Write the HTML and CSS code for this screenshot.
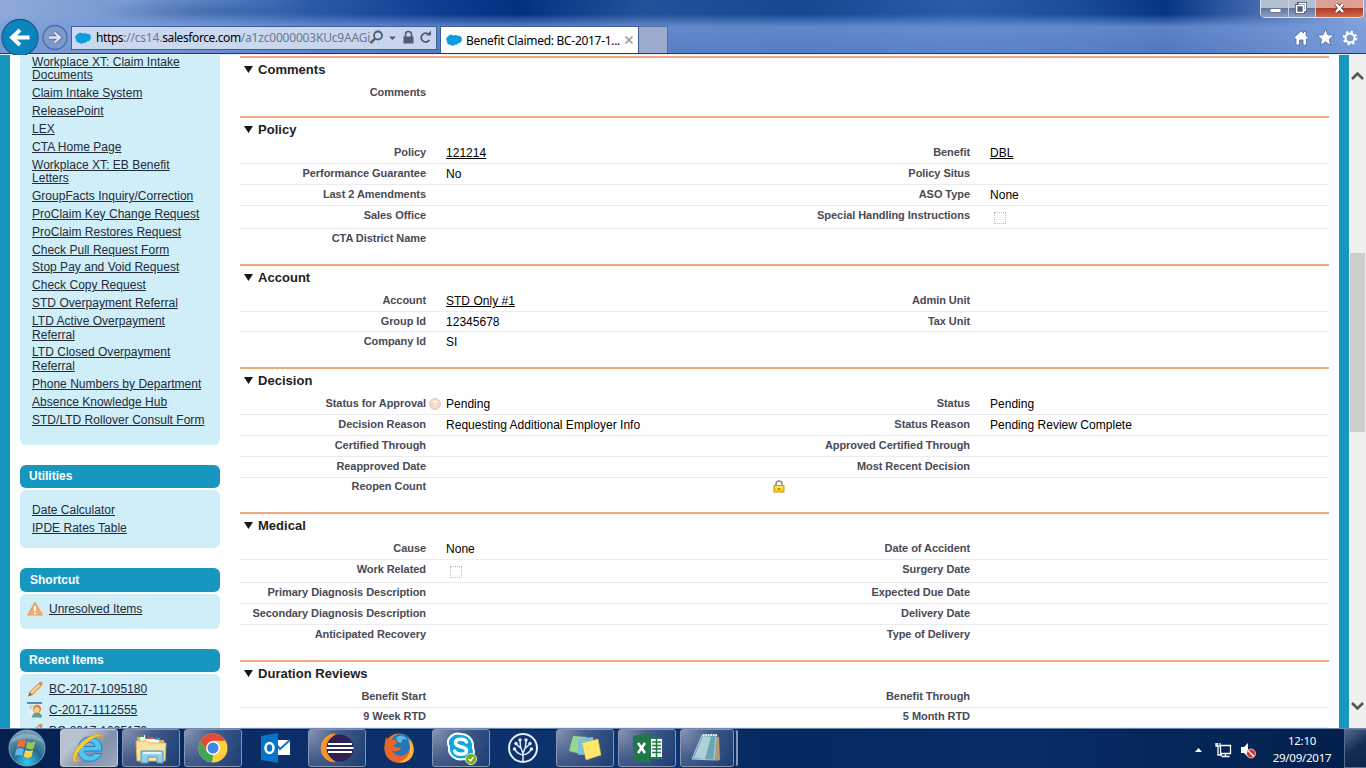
FILE: index.html
```html
<!DOCTYPE html>
<html lang="en">
<head>
<meta charset="utf-8">
<title>Benefit Claimed: BC-2017-1095180</title>
<link rel="stylesheet" href="styles.css">
</head>
<body>
<svg class="defs" width="0" height="0" aria-hidden="true">
  <symbol id="cloud" viewBox="0 0 16 12"><path fill="#0d9ddb" d="M4 1.200C5.300 .3 7 .8 7.600 1.700C9 .6 11 .8 11.700 2C14 1.200 16 2.800 15.900 5.300C15.800 8 14 9.600 12 9.300C11.300 10.700 10 11 8.800 10.700C7.800 12 5.200 12 4.300 10.700C2 10.900 .9 9.300 1.200 7.600C-.3 6 .1 3.800 1.200 3.200C1.500 2.300 2.700 1.300 4 1.200Z"/></symbol>
  <symbol id="pencil" viewBox="0 0 16 16"><path d="M1 15.500 2.500 11 5.500 14Z" fill="#776650"/><path d="M2.800 11 11 2.800 14 5.200 5.500 14Z" fill="#f4b65b" stroke="#bb8544" stroke-width=".7"/><path d="M10.800 2.800 13 .8 15.500 1 15.200 4 13.900 5.300Z" fill="#da8b75"/><path d="M4 12 12.500 3.700" stroke="#ffe0a0" stroke-width="1.200"/></symbol>
</svg>

<header class="chrome">
  <div class="window-buttons">
    <span class="wb min"><svg width="28" height="16"><rect x="9" y="8.500" width="11" height="4" rx="1" fill="#fff" stroke="#556" stroke-width=".7"/></svg></span>
    <span class="wb max"><svg width="26" height="16"><path d="M9.500 3.500h7v7h-7z M7.500 5.500h7v7h-7z" fill="#8b99b2" stroke="#34415c" stroke-width="3"/><path d="M9.500 3.500h7v7h-2 M7.500 5.500h7v7h-7z" fill="#50607c" stroke="#fff" stroke-width="1.600"/></svg></span>
    <span class="wb close"><svg width="47" height="16"><path d="m20 4 7 8m0-8-7 8" stroke="#5b2420" stroke-width="4"/><path d="m20 4 7 8m0-8-7 8" stroke="#fff" stroke-width="2.500"/></svg></span>
  </div>
  <div class="navbar">
    <svg class="nav-icons" width="72" height="40" viewBox="0 0 72 40"><circle cx="20" cy="22.500" r="18" fill="#0b86bd" stroke="#1b5b93" stroke-width="1.300"/><path d="M29.500 22.500H12m8-7.500-8 7.500 8 7.500" fill="none" stroke="#fff" stroke-width="3.800"/><circle cx="55" cy="22.500" r="12" fill="#7d9acb" stroke="#4c6aa5" stroke-width="1.300"/><path d="M49 22.500h11m-5.500-5 5.500 5-5.500 5" fill="none" stroke="#577099" stroke-width="4"/><path d="M49 22.500h11m-5.500-5 5.500 5-5.500 5" fill="none" stroke="#dce6f5" stroke-width="2.300"/></svg>
    <div class="address">
      <svg width="16" height="12"><use href="#cloud"/></svg>
      <span class="url"><b>https</b>://cs14.<b>salesforce.com</b>/a1zc0000003KUc9AAGi</span>
      <svg class="address-icons" width="66" height="20" viewBox="0 0 66 20"><g fill="none" stroke="#4d5b73"><circle cx="9" cy="7.500" r="4" stroke-width="1.800"/><path d="m6.200 10.500-4.700 4.700" stroke-width="2.400"/><path d="M36.500 9V6.500a3 3 0 0 1 6 0V9" stroke-width="1.600"/><path d="M60 6.500A4.500 4.500 0 1 0 60.500 12" stroke-width="1.800"/></g><path d="M20 8.500h7l-3.500 3.500zM34.500 8.500h10v7h-10zM57 7.500h5V2.500z" fill="#4d5b73"/></svg>
    </div>
    <div class="tab"><svg width="16" height="12"><use href="#cloud"/></svg><span class="tab-title">Benefit Claimed: BC-2017-1...</span><svg class="tab-close" width="8" height="8"><path d="m.5.5 7 7m0-7-7 7" stroke="#a3a3a3" stroke-width="1.800"/></svg></div>
    <div class="newtab"></div>
    <svg class="tools" width="68" height="20" viewBox="0 0 68 20"><g fill="#fff" stroke="#4767a1" stroke-width=".8"><path d="M1 9.500 8 3l2.500 2V3.500h2.500v4L15.500 10l-1 1.500-1-.8V17H10v-5H6.500v5H3v-6.300l-1 .8z"/><path d="m32.500 1 2.400 5.800 6.100.4-4.700 4 1.500 6.100-5.300-3.400-5.300 3.400 1.500-6.100-4.700-4 6.100-.4z"/></g><g fill="none"><circle cx="57" cy="10" r="6" stroke="#fff" stroke-width="2.500" stroke-dasharray="2.200 2.512"/><circle cx="57" cy="10" r="4.500" stroke="#fff" stroke-width="2"/></g></svg>
  </div>
</header>

<main class="page">
  <aside class="sidebar">
    <nav class="panel links first">
      <a>Workplace XT: Claim Intake<br>Documents</a><a>Claim Intake System</a><a>ReleasePoint</a><a>LEX</a><a>CTA Home Page</a><a>Workplace XT: EB Benefit<br>Letters</a><a>GroupFacts Inquiry/Correction</a><a>ProClaim Key Change Request</a><a>ProClaim Restores Request</a><a>Check Pull Request Form</a><a>Stop Pay and Void Request</a><a>Check Copy Request</a><a>STD Overpayment Referral</a><a>LTD Active Overpayment<br>Referral</a><a>LTD Closed Overpayment<br>Referral</a><a>Phone Numbers by Department</a><a>Absence Knowledge Hub</a><a>STD/LTD Rollover Consult Form</a>
    </nav>
    <h3 class="side-title">Utilities</h3>
    <nav class="panel links utilities"><a>Date Calculator</a><a>IPDE Rates Table</a></nav>
    <h3 class="side-title tall">Shortcut</h3>
    <div class="panel icons shortcut"><div class="item"><svg width="16" height="16" viewBox="0 0 16 16"><path d="M8 1.500 15.300 14H.7z" fill="#f5aa69" stroke="#e2a174" stroke-linejoin="round" stroke-width="1.200"/><path d="M8 5v5m0 1.500v1.800" stroke="#fff" stroke-width="2"/></svg><a>Unresolved Items</a></div></div>
    <h3 class="side-title">Recent Items</h3>
    <div class="panel icons recent">
      <div class="item"><svg width="16" height="16"><use href="#pencil"/></svg><a>BC-2017-1095180</a></div>
      <div class="item"><svg width="16" height="16" viewBox="0 0 16 16"><path d="M0 1h15v13H2z" fill="#e6edef"/><path d="M0 0h15v2H0z" fill="#4e8eae"/><path d="M2 4h4M2 6h3" stroke="#a5bdc6"/><path d="M5 15.500c0-4 3-5 5-5s5 1 5 5z" fill="#5d9f91"/><circle cx="10" cy="7" r="4.200" fill="#d78b40"/><circle cx="9.700" cy="8" r="2.800" fill="#f8d094"/></svg><a>C-2017-1112555</a></div>
      <div class="item"><svg width="16" height="16"><use href="#pencil"/></svg><a>BC-2017-1095179</a></div>
    </div>
  </aside>

  <div class="detail">
    <section class="h60"><h2>Comments</h2><div class="row last"><b>Comments</b></div></section>
    <section class="h148"><h2>Policy</h2>
      <div class="row"><b>Policy</b><span><a>121214</a></span><b>Benefit</b><span><a>DBL</a></span></div>
      <div class="row"><b>Performance Guarantee</b><span>No</span><b>Policy Situs</b></div>
      <div class="row"><b>Last 2 Amendments</b><span></span><b>ASO Type</b><span>None</span></div>
      <div class="row r23"><b>Sales Office</b><span></span><b>Special Handling Instructions</b><span><i class="check"></i></span></div>
      <div class="row last"><b>CTA District Name</b></div>
    </section>
    <section class="h103"><h2>Account</h2>
      <div class="row"><b>Account</b><span><a>STD Only #1</a></span><b>Admin Unit</b></div>
      <div class="row r20"><b>Group Id</b><span>12345678</span><b>Tax Unit</b></div>
      <div class="row last"><b>Company Id</b><span>SI</span></div>
    </section>
    <section class="h145"><h2>Decision</h2>
      <div class="row"><b>Status for Approval</b><span class="with-help"><svg class="help" width="12" height="12"><circle cx="6" cy="6" r="5.500" fill="#f2d9c6" stroke="#e8c7ae"/><path d="M4.300 4.800c0-2.300 3.500-2 3.400-.2 0 1.200-1.700 1.200-1.700 2.600m0 1v1.300" fill="none" stroke="#fff" stroke-width="1.200"/></svg>Pending</span><b>Status</b><span>Pending</span></div>
      <div class="row"><b>Decision Reason</b><span>Requesting Additional Employer Info</span><b>Status Reason</b><span>Pending Review Complete</span></div>
      <div class="row"><b>Certified Through</b><span></span><b>Approved Certified Through</b></div>
      <div class="row"><b>Reapproved Date</b><span></span><b>Most Recent Decision</b></div>
      <div class="row last tight"><b>Reopen Count</b><span class="lock-cell"><svg width="12" height="13" viewBox="0 0 12 13"><path d="M3 6V4a3 3 0 0 1 6 0v2" fill="none" stroke="#8f8a74" stroke-width="1.500"/><rect x="1" y="5.500" width="10" height="6.500" fill="#f9cf22" stroke="#c99a1c"/><path d="M2 7h8" stroke="#ffec86"/><path d="M6 8v2" stroke="#946b13" stroke-width="1.500"/></svg></span></div>
    </section>
    <section class="h148"><h2>Medical</h2>
      <div class="row"><b>Cause</b><span>None</span><b>Date of Accident</b></div>
      <div class="row r23"><b>Work Related</b><span><i class="check"></i></span><b>Surgery Date</b></div>
      <div class="row"><b>Primary Diagnosis Description</b><span></span><b>Expected Due Date</b></div>
      <div class="row"><b>Secondary Diagnosis Description</b><span></span><b>Delivery Date</b></div>
      <div class="row last"><b>Anticipated Recovery</b><span></span><b>Type of Delivery</b></div>
    </section>
    <section class="h148"><h2>Duration Reviews</h2>
      <div class="row"><b>Benefit Start</b><span></span><b>Benefit Through</b></div>
      <div class="row r20 tight"><b>9 Week RTD</b><span></span><b>5 Month RTD</b></div>
    </section>
  </div>

  <div class="scrollbar">
    <svg class="up" width="17" height="14"><path d="m3 10 5.500-5.500L14 10" fill="none" stroke="#555" stroke-width="2.600"/></svg>
    <div class="thumb"></div>
    <svg class="down" width="17" height="14"><path d="m3 4 5.500 5.500L14 4" fill="none" stroke="#555" stroke-width="2.600"/></svg>
  </div>
</main>

<footer class="taskbar">
  <div class="start"><svg width="40" height="38" viewBox="0 0 40 38"><defs><radialGradient id="orb" cx=".5" cy=".9" r=".9"><stop stop-color="#37c8ec"/><stop offset=".45" stop-color="#246a92"/><stop offset="1" stop-color="#7ca3b7"/></radialGradient></defs><circle cx="20" cy="19" r="18" fill="url(#orb)" stroke="#7ba2ba"/><path d="M11.500 11.500c3-1.500 5-1.300 7.500.2l-1.700 7c-2.300-1.500-4.500-1.700-7.500-.3z" fill="#eb713b"/><path d="M20.500 12.500c2.500 1.300 5 1.200 8-.3l-1.900 7.200c-3 1.300-5.300 1.100-7.800-.3z" fill="#99c954"/><path d="M9.500 20c3-1.400 5-1.200 7.400.3l-1.800 6.800c-2.300-1.500-4.500-1.500-7.300-.3z" fill="#63b8e9"/><path d="M18.400 20.900c2.500 1.300 4.800 1.300 7.800 0l-1.900 7c-2.700 1.200-5.200 1.100-7.700-.4z" fill="#ffd24c"/><path d="M4 14C7 2 33 2 36 14c-9-6-23-6-32 0z" fill="#fff" opacity=".25"/></svg></div>
  <div class="task open active"><svg width="36" height="34" viewBox="0 0 36 34"><path d="M18.500 6C26 6 31 11 31 20H13.500c.5 5.500 7.500 6 10 2.500h7C26 34 7 33 7 19 7 11 12 6 18.500 6zM13.500 15.500h10.500c-.5-5.500-9.500-5.500-10.500 0z" fill="#55c2f0" stroke="#1682c0" fill-rule="evenodd"/><path d="M31.500 9c1-8-10-3-18 5C5 22 1 32 9 29.500c-8 5-10-4-1-15C18 3 33-1 31.500 9z" fill="#f7cf38" stroke="#e0a922" stroke-width="1"/></svg></div>
  <div class="task open"><svg width="36" height="34" viewBox="0 0 36 34"><path d="M4 6h8l2 3h17v19H4z" fill="#d8b25b"/><path d="M7 4h5v4h14v4H7z" fill="#f7f7ed"/><path d="M7 4h4v2H7z" fill="#36a052"/><path d="M15 6h6v2h-6z" fill="#d74f35"/><path d="M22 7h5v2h-5z" fill="#49a0d0"/><path d="M3 10h11l2 2h17l-1 18H4z" fill="#f6e5a0" stroke="#d6b665"/><path d="M8 20h22v12h-6v-6h-9v6H8z" fill="#94cfe7" stroke="#5298b9"/><path d="M10 22h18" stroke="#dff5ff" stroke-width="2"/></svg></div>
  <div class="task open"><svg width="32" height="32" viewBox="0 0 32 32"><circle cx="16" cy="16" r="14.500" fill="#fdd03f"/><path d="M3.450 8.750A14.500 14.500 0 0 1 28.550 8.750H16L9.700 19.600z" fill="#e14a3b"/><path d="M3.450 8.750 9.700 19.600 16 23.250 15 30.500A14.500 14.500 0 0 1 3.450 8.750z" fill="#3fa653"/><circle cx="16" cy="16" r="7" fill="#fff"/><circle cx="16" cy="16" r="5.500" fill="#4285e8"/></svg></div>
  <div class="task"><svg width="32" height="32" viewBox="0 0 32 32"><path d="M16 8h15v15H16z" fill="#fff"/><path d="m16 11 5 6 10-9" fill="none" stroke="#1473c5" stroke-width="2"/><path d="M2 4 19 1v30L2 28z" fill="#0874c5"/><ellipse cx="10.500" cy="16" rx="4" ry="5" fill="none" stroke="#fff" stroke-width="2.600"/></svg></div>
  <div class="task open"><svg width="34" height="32" viewBox="0 0 34 32"><path d="M15 2a14 14 0 0 0 0 28C6 25 6 7 15 2" fill="#f7942a" stroke="#f7942a"/><circle cx="20" cy="16" r="13.500" fill="#2c2255"/><path d="M8 12h24M6.500 16h27M8 20h24" stroke="#fff" stroke-width="2"/></svg></div>
  <div class="task"><svg width="32" height="32" viewBox="0 0 32 32"><circle cx="16" cy="16" r="14.500" fill="#ef7824"/><circle cx="18" cy="13" r="11" fill="#2376b7"/><path d="M3 5c1 2 3 3 6 3 3-1 5 1 5 3l-4 3c3 1 5 3 8 1 0 4-6 6-10 3 3 7 12 8 17 2 3-4 3-9 0-13 6 4 8 14 2 20C19 34 4 31 2 20 1 14 2 10 3 5z" fill="#e9652b"/><path d="M25 7c6 4 8 14 2 20-3 3-7 4-11 3 9-2 14-11 9-23z" fill="#ffb83d"/><path d="M13 6c4-4 10-2 11 2l-4-1-2 4-3-1z" fill="#5eb9dc"/></svg></div>
  <div class="task open"><svg width="34" height="34" viewBox="0 0 34 34"><path d="M17 3C24 3 30 9 29 17c3 6-2 13-9 11C11 30 4 24 5 16 1 8 9 1 17 3z" fill="#0ba8e5" stroke="#fff" stroke-width="2"/><path d="M22.500 11c-2-4-11-3.500-11 1s11 3 11 7.500c0 5-10 4.800-12 .5" fill="none" stroke="#fff" stroke-width="3.500" stroke-linecap="round"/><circle cx="27" cy="28" r="5.500" fill="#73aa22" stroke="#d7e8b7"/><path d="m24.500 28 2 2 3-4" fill="none" stroke="#fff" stroke-width="1.400"/></svg></div>
  <div class="task"><svg width="32" height="32" viewBox="0 0 32 32"><circle cx="16" cy="16" r="14" fill="none" stroke="#e6edf7" stroke-width="2"/><path d="M16 30V21M16 23c-5-1-7-3-8-6m8 6c5-1 7-3 8-6M16 21c-2-4-3-5-3-12m3 12c2-4 3-5 3-12M13.500 16 9 12m9.500 4 4.500-4" fill="none" stroke="#e6edf7" stroke-width="1.500"/><g fill="#e6edf7"><circle cx="13" cy="8" r="1.700"/><circle cx="19" cy="8" r="1.700"/><circle cx="7.500" cy="17" r="1.700"/><circle cx="24.500" cy="17" r="1.700"/><circle cx="9" cy="11.500" r="1.700"/><circle cx="23" cy="11.500" r="1.700"/></g></svg></div>
  <div class="task open"><svg width="36" height="32" viewBox="0 0 36 32"><path d="m6 4 14 1-3 18-15-4z" fill="#9bd68e"/><path d="m11 7 15-2 1 16-16 2z" fill="#7ec1df"/><path d="m15 11 16-4 3 16-15 5z" fill="#ffe86b" stroke="#d6b748" stroke-width=".6"/></svg></div>
  <div class="task open"><svg width="32" height="32" viewBox="0 0 32 32"><path d="M17 5h14v22H17z" fill="#20774b"/><path d="M20 7h11v18H20z" fill="#fff"/><path d="M21 10h9M21 13.500h9M21 17h9M21 20.500h9M25.500 7v18" stroke="#20774b" stroke-width="1.500"/><path d="M2 4 19 1v30L2 28z" fill="#20774b"/><path d="m7 11 7 10m0-10L7 21" stroke="#fff" stroke-width="2.600"/></svg></div>
  <div class="task open double"><svg width="34" height="32" viewBox="0 0 34 32"><path d="m13 3 16 2 1 23-5 1z" fill="#ad9a7a"/><path d="M12 3h14l-2 25-22-1z" fill="#6ba5b5" stroke="#a9cdd5"/><path d="m13 4 8 1-6 22-11-1z" fill="#c4e0e6" opacity=".75"/><path d="M13 3h15" stroke="#eef" stroke-width="2" stroke-dasharray="1.500 1"/></svg></div>
  <svg class="tray" width="62" height="24" viewBox="0 0 62 24"><path d="M1 14 4.500 10 8 14z" fill="#fff"/><path d="M26.500 7.500h10v8h-10zM31.500 16v2.500m-4 0h8M23.500 5v4m-1.500-4v3h4V5m-2 4v8h4" fill="none" stroke="#fff" stroke-width="1.300"/><path d="M47 9h3l4-4v14l-4-4h-3z" fill="#fff"/><circle cx="57" cy="15.500" r="4.500" fill="#d9302b" stroke="#fff" stroke-width=".7"/><path d="m54 12.500 6 6" stroke="#fff" stroke-width="1.500"/></svg>
  <div class="clock"><span>12:10</span><span>29/09/2017</span></div>
  <div class="show-desktop"></div>
</footer>
</body>
</html>
```
FILE: styles.css
```css
* { box-sizing: border-box; }
body { margin: 0; width: 1366px; height: 768px; overflow: hidden; display: flex; flex-direction: column; font-family: "Liberation Sans", Arial, sans-serif; font-size: 12px; background: #fff; }
svg { display: block; flex: none; }
.defs { position: absolute; }

.chrome { height: 55px; flex: none; display: flex; flex-direction: column; border-bottom: 1px solid #e8eefa; box-shadow: inset 0 -1px #1d3a80;
  background:
    linear-gradient(180deg, transparent 14px, rgba(120,156,220,.75) 27px, rgba(110,148,214,.7) 54px),
    radial-gradient(ellipse 130px 14px at 220px 12px, rgba(38,82,150,.45), transparent),
    linear-gradient(90deg, #8eaad8 0, #7799d0 130px, #5780c2 220px, #2d5ba8 310px, #0d3d8e 440px, #023180 520px, #235299 640px, #164791 800px, #2a5ca8 960px, #1a4c99 1080px, #063582 1165px, #4168ad 1255px, #8fabd9 1366px); }
.window-buttons { align-self: flex-end; width: 104px; height: 18px; margin-right: 2px; display: flex; border: 1px solid #dbe3f1; border-top: 0; border-radius: 0 0 5px 5px; overflow: hidden; }
.wb { background: linear-gradient(#b4bfd4 0 45%, #61779f 50%, #8d9fc0); border-right: 1px solid #c9d3e5; }
.min { width: 28px; }
.max { width: 27px; }
.close { width: 47px; border: 0; background: linear-gradient(#dba195 0 45%, #b33a26 50%, #cc6c4d); }
.navbar { height: 36px; display: flex; align-items: flex-start; }
.nav-icons { margin-top: -3px; width: 72px; }
.address { width: 366px; height: 24px; margin-top: 8px; display: flex; align-items: center; border: 1px solid #405e9a; background: rgba(216,226,243,.87); padding-left: 3px; margin-left: -1px; }
.url { font-family: "Noto Sans", sans-serif; font-size: 12px; letter-spacing: -.2px; color: #6e7889; margin-left: 5px; width: 272px; white-space: nowrap; line-height: 20px; }
.url b { font-weight: 400; color: #000; letter-spacing: -.4px; }
.address-icons { margin-left: 1px; }
.tab { width: 199px; height: 27px; margin: 8px 0 0 3px; background: #fff; border: 1px solid #3e5c99; border-bottom: 0; display: flex; align-items: center; padding-left: 5px; }
.tab-title { font-family: "Noto Sans", sans-serif; letter-spacing: -.3px; margin-left: 4px; width: 155px; white-space: nowrap; }
.tab-close { margin-left: 4px; }
.newtab { width: 29px; height: 27px; margin-top: 8px; background: #9caace; border: 1px solid #536ea6; border-left: 0; border-bottom: 0; }
.tools { margin: 10px 5px 0 auto; }

.page { flex: none; height: 673px; display: flex; padding-left: 10px; overflow: hidden; background: linear-gradient(90deg, #1797c0 10px, #fff 10px); }
.sidebar { width: 200px; margin-left: 10px; flex: none; }
.panel { background: #cfeef8; border-radius: 6px; color: #222b38; }
.panel a { text-decoration: underline; text-underline-offset: 1px; }
.links { padding-left: 12px; line-height: 13.6px; }
.links a { display: block; margin-bottom: 4.25px; white-space: nowrap; letter-spacing: .02px; }
.first { height: 390px; border-radius: 0 0 6px 6px; padding-top: .8px; }
.side-title { margin: 20px 0 2px; height: 23px; line-height: 22px; padding-left: 9px; border-radius: 6px; background: #1797c0; color: #fff; font-size: 12px; font-weight: bold; }
.side-title.tall { height: 24px; line-height: 24px; padding-left: 10px; }
.utilities { height: 58px; padding-top: 13.8px; }
.shortcut { height: 35px; padding-top: 4px; }
.recent { height: 90px; padding-top: 4px; }
.item { display: flex; height: 21px; padding-left: 7px; gap: 6px; line-height: 20px; align-items: center; }

.detail { width: 1089px; margin-left: 20px; padding-top: 1px; flex: none; }
section { border-top: 2px solid #f5a77c; }
.h60 { height: 60px; }
.h148 { height: 148px; }
.h103 { height: 103px; }
.h145 { height: 145px; }
h2 { margin: 0; height: 25px; line-height: 23px; padding-left: 4px; font-size: 13px; letter-spacing: .03px; color: #222; display: flex; gap: 5px; }
h2::before { content: ""; width: 9px; height: 7px; margin-top: 8px; background: #15151f; clip-path: polygon(0 0, 100% 0, 50% 100%); }
.row { display: grid; grid-template-columns: 186px 344px 200px 1fr; height: 21px; line-height: 19px; border-bottom: 1px solid #ececec; color: #000; }
.row b { font-size: 11px; letter-spacing: -.06px; color: #4a4a56; text-align: right; white-space: nowrap; }
.row span { padding-left: 20px; padding-top: 1px; white-space: nowrap; letter-spacing: .02px; }
.row a { text-decoration: underline; text-underline-offset: 1px; }
.row.r23 { height: 23px; }
.row.r20 { height: 20px; }
.row.last { border-bottom: 0; }
.row.tight { line-height: 17px; }
.row .check { display: block; width: 12px; height: 12px; margin: 5px 0 0 4px; border: 1px dotted #bbb; }
.row .with-help { display: flex; padding-left: 3px; gap: 5px; }
.help { margin-top: 3px; }
.row .lock-cell { padding: 2px 0 0 347px; }

.scrollbar { width: 27px; margin-left: auto; flex: none; display: flex; flex-direction: column; border-left: 10px solid #1797c0; background: #f0f0f0; height: 673px; }
.up { margin-top: 14px; }
.thumb { width: 15px; height: 179px; margin: 170px 0 0 1px; background: #cdcdcd; }
.down { margin-top: auto; margin-bottom: 15px; }

.taskbar { height: 40px; flex: none; display: flex; border-top: 1px solid #6f87ad; background: linear-gradient(90deg, #04204f, #0b2e68 20%, #0c3470 50%, #04295f 56%, #062d66 75%, #021f49); box-shadow: inset 0 1px #0a1f45; }
.start { width: 60px; padding-left: 7px; flex: none; }
.task { width: 58px; height: 38px; margin-right: 4px; display: flex; align-items: center; justify-content: center; flex: none; }
.open { border: 1px solid #8795b1; border-radius: 3px; background: radial-gradient(circle at 0 0, #8795b4, #445c8a 45%, #1a3d74); }
.active { border-color: #c0c9d8; background: linear-gradient(135deg, #b8c1d0 30%, #8191ac 60%, #9ba9bf); }
.double { box-shadow: 2px 0 #0d2d60, 5px 0 0 -1px #8795b1; width: 54px; }
.tray { margin: 9px 0 0 auto; }
.clock { width: 76px; margin-left: 8px; display: flex; flex-direction: column; align-items: center; color: #fff; font: 11.5px/17px "Noto Sans", sans-serif; letter-spacing: -.25px; padding-top: 3px; }
.show-desktop { width: 22px; margin-left: 4px; border: 1px solid #536e91; border-right: 0; background: linear-gradient(145deg, #55698a, #152d55 50%, #0b244c); }
```
